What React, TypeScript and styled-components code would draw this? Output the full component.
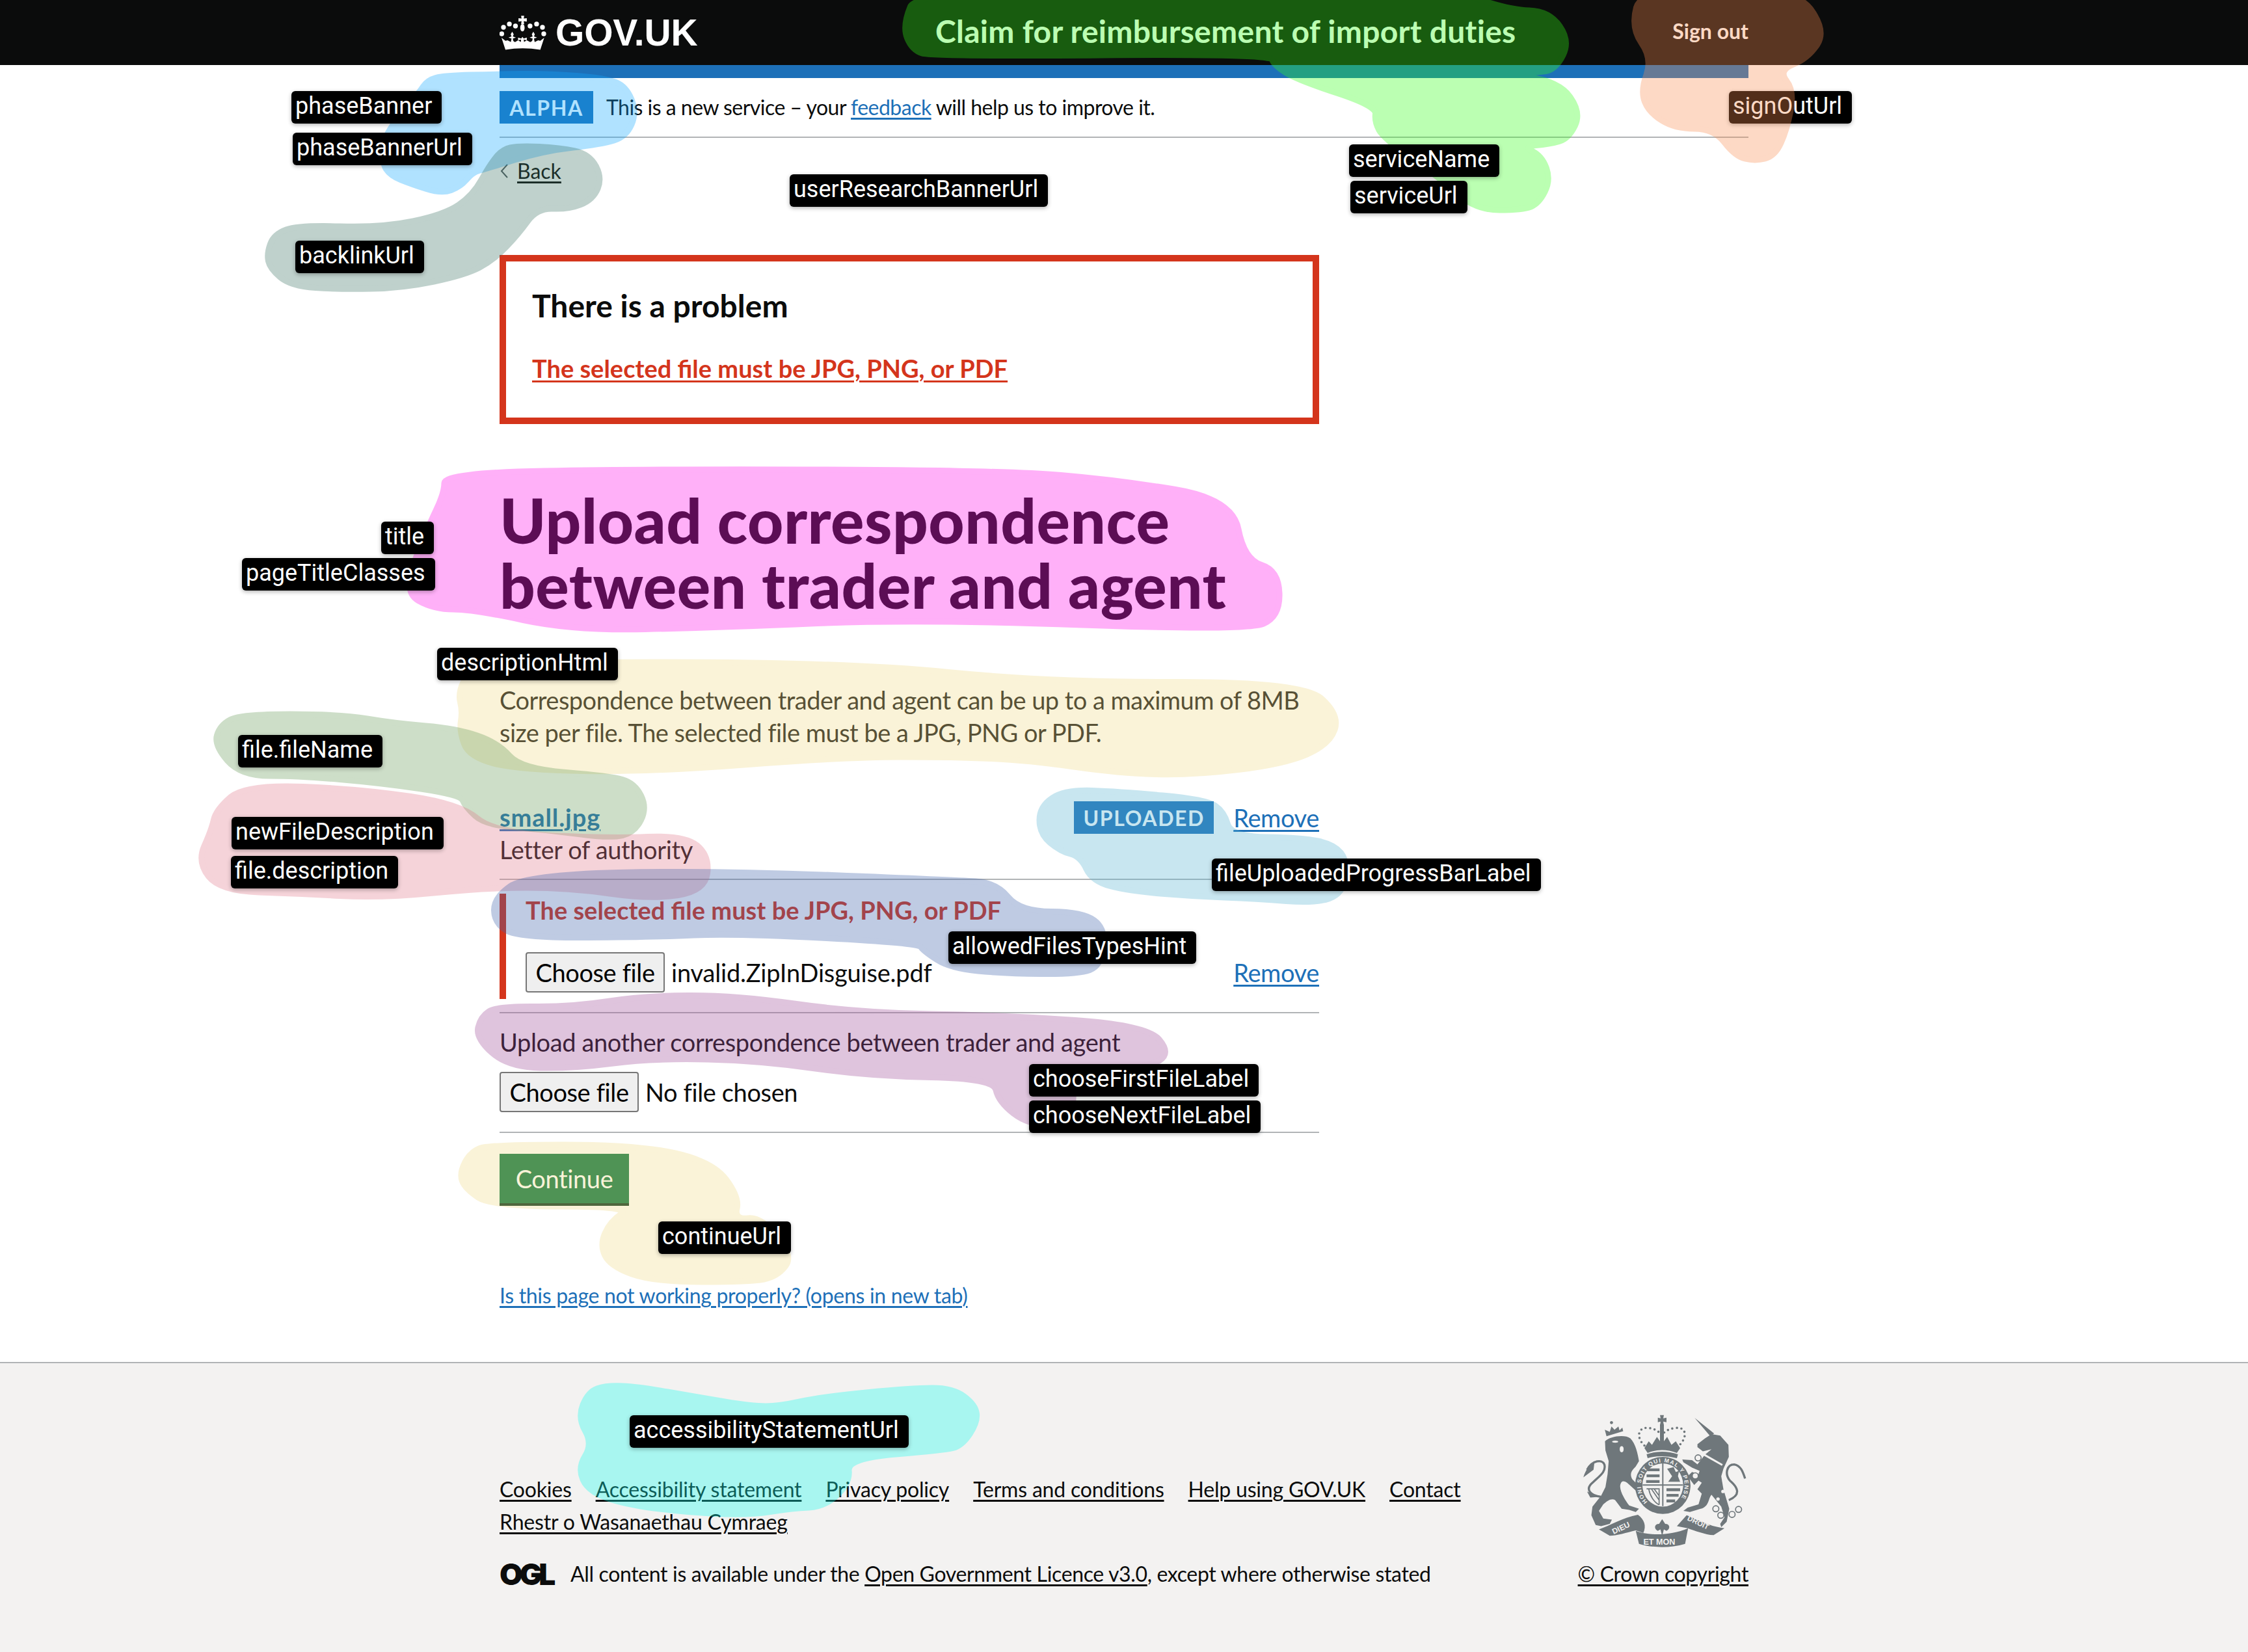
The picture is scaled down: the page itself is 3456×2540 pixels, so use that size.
import React from "react";
import styled, { createGlobalStyle } from "styled-components";

const GlobalStyle = createGlobalStyle`
	html, body {
		margin: 0;
		padding: 0;
		background: #fff;
		color: #0b0c0c;
		font-family: "Lato", "Liberation Sans", sans-serif;
		font-size: 38px;
		line-height: 50px;
		letter-spacing: -0.38px;
	}
`;

const Page = styled("div")`
	position: relative;
	width: 3456px;
	height: 2540px;
	overflow: hidden;
	display: flex;
	flex-direction: column;
`;

const Container = styled("div")`
	width: 1920px;
	margin: 0 auto;
`;

const Header = styled("header")`
	height: 100px;
	flex: none;
	background: #0b0c0c;
	color: #fff;
`;

const HeaderContent = styled(Container)`
	height: 100%;
	display: flex;
	align-items: center;
`;

const Logo = styled("a")`
	width: 670px;
	display: flex;
	align-items: center;
	gap: 14px;
	font-family: "Liberation Sans", sans-serif;
	font-weight: 700;
	font-size: 57px;
	letter-spacing: -0.2px;
	line-height: 96px;
`;

const ServiceName = styled("a")`
	flex: 1;
	padding-bottom: 4px;
	font-size: 48px;
	font-weight: 700;
	letter-spacing: 0.27px;
`;

const SignOut = styled("a")`
	padding-bottom: 4px;
	font-size: 32px;
	font-weight: 700;
	letter-spacing: 0;
`;

const BlueBand = styled(Container)`
	height: 20px;
	flex: none;
	background: #1d70b8;
`;

const PhaseBanner = styled("div")`
	display: flex;
	align-items: center;
	gap: 20px;
	padding: 20px 0;
	border-bottom: 2px solid #b1b4b6;
	font-size: 32px;
	letter-spacing: -0.52px;
`;

const Tag = styled("strong")<{ $width: number }>`
	display: block;
	width: ${({ $width }) => $width}px;
	height: 50px;
	background: #1d70b8;
	color: #fff;
	font-size: 32px;
	line-height: 52px;
	letter-spacing: 1.6px;
	text-align: center;
`;

const TextLink = styled("a")<{ $color?: string }>`
	color: ${({ $color }) => $color ?? "#1d70b8"};
	text-decoration: underline;
	text-decoration-thickness: 3px;
	text-underline-offset: 4px;
`;

const BackRow = styled("div")`
	display: flex;
	align-items: center;
	gap: 13px;
	margin-top: 36px;
	font-size: 32px;
	line-height: 30px;
	letter-spacing: 0;
`;

const ErrorSummary = styled("div")`
	width: 1260px;
	box-sizing: border-box;
	margin-top: 114px;
	padding: 38px 40px 51px;
	border: 10px solid #d4351c;
`;

const ErrorTitle = styled("h2")`
	margin: 0 0 41px;
	font-size: 48px;
	line-height: 60px;
	font-weight: 700;
	letter-spacing: 0;
`;

const ErrorLink = styled("a")`
	display: block;
	color: #d4351c;
	font-weight: 700;
	letter-spacing: 0;
	text-decoration: underline;
	text-decoration-thickness: 3px;
	text-underline-offset: 4px;
`;

const Title = styled("h1")`
	width: 1300px;
	margin: 97px 0 0;
	font-size: 96px;
	line-height: 100px;
	font-weight: 900;
	letter-spacing: 0.5px;
`;

const Description = styled("p")`
	width: 1260px;
	margin: 102px 0 0;
	letter-spacing: -0.52px;
`;

const Narrow = styled("div")`
	width: 1260px;
`;

const FileEntry = styled("div")`
	display: flex;
	justify-content: space-between;
	margin-top: 80px;
	padding-bottom: 20px;
	border-bottom: 2px solid #b1b4b6;
`;

const FileActions = styled("div")`
	display: flex;
	gap: 30px;
	padding-top: 1px;
`;

const FileName = styled("a")`
	display: block;
	color: #1d70b8;
	font-weight: 700;
	letter-spacing: 0.9px;
	text-decoration: underline;
	text-decoration-thickness: 3px;
	text-underline-offset: 4px;
`;

const InvalidEntry = styled("div")`
	padding: 21px 0 20px;
	border-bottom: 2px solid #b1b4b6;
`;

const ErrorGroup = styled("div")`
	box-sizing: border-box;
	height: 162px;
	padding-left: 30px;
	border-left: 10px solid #d4351c;
`;

const ErrorMessage = styled("div")`
	color: #d4351c;
	font-weight: 700;
	letter-spacing: 0;
`;

const InputRow = styled("div")<{ $top: number }>`
	display: flex;
	justify-content: space-between;
	align-items: center;
	margin-top: ${({ $top }) => $top}px;
`;

const FilePicker = styled("div")`
	display: flex;
	align-items: center;
	gap: 10px;
`;

const ChosenFile = styled("span")`
	letter-spacing: -0.2px;
`;

const ChooseButton = styled("button")`
	box-sizing: border-box;
	width: 214px;
	height: 62px;
	padding: 0;
	background: #efefef;
	border: 2px solid #767676;
	border-radius: 4px;
	color: #000;
	font: inherit;
	letter-spacing: inherit;
`;

const NextEntry = styled("div")`
	padding: 19px 0 30px;
	border-bottom: 2px solid #b1b4b6;
`;

const Continue = styled("button")`
	display: block;
	box-sizing: border-box;
	width: 199px;
	height: 80px;
	margin-top: 32px;
	padding: 0 0 4px;
	background: #00703c;
	border: 0;
	box-shadow: inset 0 -4px 0 #002d18;
	color: #fff;
	font: inherit;
	letter-spacing: inherit;
`;

const ReportRow = styled("div")`
	margin-top: 118px;
	font-size: 32px;
	line-height: 40px;
	letter-spacing: -0.3px;
`;

const Footer = styled("footer")`
	flex: 1;
	margin-top: 82px;
	background: #f3f2f1;
	border-top: 2px solid #b1b4b6;
	font-size: 32px;
	letter-spacing: -0.35px;
`;

const FooterContent = styled(Container)`
	display: flex;
	justify-content: space-between;
	align-items: flex-end;
	padding-top: 74px;
`;

const FooterMeta = styled("div")`
	padding-top: 95px;
`;

const FooterLinks = styled("div")`
	display: flex;
	flex-wrap: wrap;
	width: 1530px;
	column-gap: 37px;
	letter-spacing: -0.2px;
`;

const Licence = styled("div")`
	display: flex;
	align-items: center;
	gap: 27px;
	margin-top: 30px;
`;

const OglMark = styled("span")`
	width: 82px;
	font-family: "Inter", sans-serif;
	font-size: 46px;
	font-weight: 900;
	letter-spacing: -5px;
`;

const CrestColumn = styled("div")`
	display: flex;
	flex-direction: column;
	align-items: flex-end;
	gap: 12px;
`;

const Blobs = styled("svg")`
	position: absolute;
	left: 0;
	top: 0;
	pointer-events: none;
`;

const FieldLabel = styled("span")<{ $x: number; $y: number }>`
	position: absolute;
	left: ${({ $x }) => $x}px;
	top: ${({ $y }) => $y}px;
	height: 50px;
	padding: 0 15px 0 6px;
	background: #000;
	border-radius: 6px;
	box-shadow: 0 2px 6px rgba(0, 0, 0, 0.3);
	color: #fff;
	font-family: "Roboto", sans-serif;
	font-size: 36px;
	line-height: 46px;
	letter-spacing: 0;
	white-space: nowrap;
`;

type Blob = { color: string; points: [number, number][] };

const blobs: Blob[] = [
	{ color: "rgb(18,168,255)", points: [[683,116],[766,114],[842,113],[931,120],[963,133],[979,173],[963,210],[925,222],[836,232],[746,260],[727,265],[708,287],[679,298],[632,283],[600,270],[587,250],[590,207],[644,143],[657,123]] },
	{ color: "rgb(63,117,102)", points: [[797,224],[861,227],[906,237],[926,273],[912,307],[874,322],[826,320],[797,360],[759,400],[715,423],[619,443],[523,445],[447,440],[415,413],[410,390],[421,360],[459,346],[587,350],[683,330],[727,300],[753,253],[772,230]] },
	{ color: "rgb(51,255,24)", points: [[1412,-20],[2218,-20],[2320,15],[2382,17],[2414,63],[2392,107],[2361,112],[2305,112],[2397,125],[2431,173],[2412,213],[2382,222],[2341,225],[2371,240],[2384,277],[2366,313],[2341,323],[2269,323],[2218,277],[2127,213],[2113,187],[2116,163],[1994,123],[1958,100],[1953,83],[1433,87],[1402,77],[1387,40]] },
	{ color: "rgb(255,18,234)", points: [[683,727],[992,721],[1543,723],[1719,738],[1895,767],[1913,860],[1966,877],[1968,948],[1917,970],[1411,952],[1102,965],[882,970],[727,937],[667,937],[619,910],[657,812],[683,758]] },
	{ color: "rgb(240,219,138)", points: [[746,1018],[1300,1018],[1616,1049],[2002,1048],[2060,1099],[2044,1145],[1974,1175],[1833,1192],[1721,1189],[1581,1169],[1468,1164],[1300,1164],[1001,1187],[797,1184],[721,1164],[706,1124],[711,1093],[704,1066],[721,1030]] },
	{ color: "rgb(105,156,90)", points: [[370,1098],[523,1098],[606,1112],[702,1120],[766,1142],[801,1182],[938,1193],[976,1204],[995,1242],[976,1280],[938,1289],[842,1276],[746,1269],[715,1240],[708,1222],[587,1204],[459,1193],[370,1193],[329,1146],[338,1115]] },
	{ color: "rgb(225,123,141)", points: [[377,1206],[555,1213],[708,1236],[759,1280],[938,1289],[1053,1284],[1091,1316],[1084,1370],[1001,1383],[874,1365],[746,1365],[587,1381],[459,1374],[338,1370],[303,1325],[325,1276],[332,1245]] },
	{ color: "rgb(90,180,210)", points: [[1637,1214],[1721,1217],[1854,1229],[1882,1248],[1893,1286],[2002,1288],[2051,1298],[2072,1324],[2065,1374],[2023,1389],[1932,1382],[1833,1378],[1735,1370],[1679,1355],[1661,1317],[1630,1309],[1598,1282],[1598,1240]] },
	{ color: "rgb(63,99,171)", points: [[810,1345],[1091,1338],[1468,1353],[1532,1357],[1568,1401],[1665,1402],[1700,1428],[1693,1485],[1658,1498],[1546,1497],[1461,1489],[1419,1462],[1412,1450],[1129,1435],[1005,1441],[798,1442],[760,1420],[759,1380]] },
	{ color: "rgb(159,78,153)", points: [[764,1547],[880,1548],[988,1531],[1129,1530],[1320,1557],[1543,1561],[1763,1576],[1801,1620],[1763,1642],[1650,1650],[1650,1730],[1581,1730],[1535,1694],[1527,1658],[1336,1655],[1171,1631],[1005,1627],[880,1643],[781,1641],[731,1596],[739,1563]] },
	{ color: "rgb(240,219,138)", points: [[752,1760],[980,1760],[1096,1786],[1137,1841],[1129,1875],[1171,1871],[1220,1931],[1195,1963],[1154,1971],[1005,1971],[938,1947],[922,1914],[938,1878],[972,1855],[756,1855],[715,1828],[706,1804],[723,1771]] },
	{ color: "rgb(19,255,238)", points: [[932,2130],[981,2132],[1072,2148],[1156,2162],[1198,2162],[1261,2148],[1402,2134],[1465,2134],[1500,2160],[1503,2187],[1479,2223],[1451,2230],[1303,2242],[1307,2280],[1268,2317],[1219,2319],[1149,2330],[1051,2325],[960,2313],[904,2293],[888,2257],[911,2220],[888,2180],[904,2140]] },
	{ color: "rgb(249,141,81)", points: [[2524,-20],[2759,-20],[2808,47],[2780,90],[2734,108],[2759,140],[2747,200],[2729,240],[2698,248],[2667,240],[2635,198],[2575,198],[2535,173],[2522,140],[2540,90],[2507,43]] },
];

const labels: { text: string; x: number; y: number }[] = [
	{ text: "phaseBanner", x: 448, y: 140 },
	{ text: "phaseBannerUrl", x: 450, y: 204 },
	{ text: "backlinkUrl", x: 454, y: 370 },
	{ text: "userResearchBannerUrl", x: 1214, y: 268 },
	{ text: "serviceName", x: 2074, y: 222 },
	{ text: "serviceUrl", x: 2076, y: 278 },
	{ text: "title", x: 586, y: 802 },
	{ text: "pageTitleClasses", x: 372, y: 858 },
	{ text: "descriptionHtml", x: 672, y: 996 },
	{ text: "file.fileName", x: 366, y: 1130 },
	{ text: "newFileDescription", x: 356, y: 1256 },
	{ text: "file.description", x: 355, y: 1316 },
	{ text: "fileUploadedProgressBarLabel", x: 1863, y: 1320 },
	{ text: "allowedFilesTypesHint", x: 1458, y: 1432 },
	{ text: "chooseFirstFileLabel", x: 1582, y: 1636 },
	{ text: "chooseNextFileLabel", x: 1582, y: 1692 },
	{ text: "continueUrl", x: 1012, y: 1878 },
	{ text: "accessibilityStatementUrl", x: 968, y: 2176 },
];

// closed curve through the midpoints of a hand traced outline
function outline(points: [number, number][]) {
	const mid = (a: [number, number], b: [number, number]) => `${(a[0] + b[0]) / 2} ${(a[1] + b[1]) / 2}`;
	const last = points[points.length - 1];
	let d = `M${mid(last, points[0])}`;
	points.forEach((p, i) => {
		d += ` Q${p[0]} ${p[1]} ${mid(p, points[(i + 1) % points.length])}`;
	});
	return `${d} Z`;
}

function Crown() {
	const dots = [[103, 118], [130, 103], [158, 112], [225, 112], [255, 103], [282, 118], [95, 148], [288, 148]];
	return (
		<svg width="72" height="53" viewBox="85 65 215 157" fill="#fff">
			{dots.map(([cx, cy]) => <circle key={`${cx}-${cy}`} cx={cx} cy={cy} r="11" />)}
			<path d="M184 65 H198 L196 78 L210 76 V92 L196 90 L198 104 H184 L186 90 L172 92 V76 L186 78 Z" />
			<ellipse cx="190" cy="120" rx="10" ry="17" />
			<path d="M94 166 L112 180 L122 178 L138 186 L146 180 L156 186 L170 178 L184 186 L196 186 L210 178 L226 186 L236 180 L246 186 L262 178 L272 180 L290 166 L272 221 Q190 208 112 221 Z" />
			<path d="M143 138 L150 150 L146 160 L160 165 L146 170 L150 190 H136 L140 170 L126 165 L140 160 L136 150 Z" />
			<path d="M190 162 L196 170 L210 165 V178 L196 174 L198 190 H182 L184 174 L170 178 V165 L184 170 Z" />
			<path d="M240 138 L247 150 L243 160 L257 165 L243 170 L247 190 H233 L237 170 L223 165 L237 160 L233 150 Z" />
		</svg>
	);
}

function BackChevron() {
	return (
		<svg width="14" height="24" viewBox="0 0 14 24" fill="none" stroke="#505a5f" strokeWidth="2">
			<path d="M12 2 L3 12 L12 22" />
		</svg>
	);
}

function Crest() {
	const c = "#6f777b";
	const bg = "#f3f2f1";
	const rings = [[928, 335], [915, 418], [1010, 570], [1033, 600], [1085, 596], [1115, 573]];
	const spots = [[1048, 442], [1043, 490], [1020, 525]];
	const motto = { fontFamily: "Liberation Sans, sans-serif", fontWeight: 700, fill: bg, letterSpacing: 0 };
	return (
		<svg width="260" height="213" viewBox="380 120 780 640">
			{/* lion */}
			<path fill={c} d="M498 258 C520 235 590 225 615 245 C640 270 650 320 655 350 L640 375 C620 395 610 410 625 435 L660 470 L645 490 L600 450 C585 440 575 440 570 455 C560 480 590 530 610 555 L655 570 L640 585 L610 575 L575 570 L545 530 C530 520 510 530 490 550 L470 580 L490 615 L530 620 L520 640 L480 650 L455 645 L435 600 L440 560 L480 510 L500 470 L510 410 L515 350 L500 300 Z" />
			<path fill="none" stroke={c} strokeWidth="10" d="M480 515 C430 510 405 480 440 450 C470 420 505 400 495 365 C485 340 440 345 415 390" />
			<path fill={c} d="M398 425 C410 385 430 365 450 350 L445 390 Z M415 490 L470 515 L430 518 Z" />
			<path fill={c} d="M505 235 L497 205 L520 215 L528 190 L542 205 L560 190 L565 208 L578 195 L582 212 Z" />
			<circle cx="528" cy="172" r="7" fill={c} />
			<ellipse cx="545" cy="260" rx="14" ry="5" fill={bg} />
			<ellipse cx="575" cy="295" rx="9" ry="14" fill={bg} />
			{/* unicorn */}
			<path fill={c} d="M912 150 L1002 222 L985 236 Z" />
			<path fill={c} d="M925 272 L960 245 L990 225 L1030 232 L1068 275 L1070 330 L1045 385 L1035 420 L1045 480 L1060 530 L1072 570 L1060 630 L1035 655 L1030 640 L1050 610 L1035 560 L990 505 C975 520 980 560 940 570 L890 585 L860 580 L880 565 L930 550 L945 500 L925 480 L945 450 L930 440 L910 460 L880 420 L900 400 L930 410 L935 395 L900 380 L860 355 L855 342 L900 345 L925 365 L960 320 L990 295 L950 305 L925 285 Z" />
			<path fill="none" stroke={bg} strokeWidth="9" d="M952 318 L1040 368" />
			<path fill="none" stroke={c} strokeWidth="10" d="M1070 530 C1130 505 1110 470 1075 440 C1050 410 1060 365 1095 365 C1125 370 1135 400 1145 430" />
			{rings.map(([cx, cy]) => <circle key={cx} cx={cx} cy={cy} r="14" fill={bg} stroke={c} strokeWidth="5" />)}
			{spots.map(([cx, cy]) => <circle key={cy} cx={cx} cy={cy} r="8" fill={bg} />)}
			{/* crown */}
			<path fill="none" stroke={c} strokeWidth="11" strokeLinecap="round" strokeDasharray="0 21" d="M680 278 C640 240 650 190 700 197 C730 200 750 215 760 232 C770 215 790 200 825 197 C875 190 880 240 840 278" />
			<path fill={c} d="M680 290 L700 258 L715 275 L738 238 L752 258 V180 H770 V258 L785 238 L805 275 L825 258 L845 290 L830 312 Q760 285 695 312 Z" />
			<path fill={c} d="M752 137 H770 L767 152 L782 149 V170 L767 167 L770 185 H752 L755 167 L742 170 V149 L755 152 Z" />
			<path fill={c} d="M690 318 Q760 295 835 318 L830 336 Q760 318 695 336 Z" />
			{/* garter and shield */}
			<ellipse cx="765" cy="462" rx="128" ry="132" fill={c} />
			<ellipse cx="765" cy="460" rx="94" ry="100" fill={bg} />
			<path fill="none" stroke={c} strokeWidth="6" d="M765 358 V558 M672 460 H858" />
			<path fill="none" stroke={c} strokeWidth="13" d="M695 390 H750 M690 418 H750 M688 444 H750 M782 482 H845 M782 508 H838 M782 534 H822" />
			<path fill={c} d="M785 385 L815 378 L825 400 L840 395 L835 420 L845 445 H790 L808 420 Z" />
			<path fill="none" stroke={c} strokeWidth="5" d="M700 478 C705 510 725 540 748 552 M712 478 L748 530 M725 478 L748 510 M690 478 H748 V552" />
			<path id="garter-ring" fill="none" d="M694 538 A101 107 0 1 1 836 538" />
			<text fontSize="26" {...motto}>
				<textPath href="#garter-ring" textLength="470">HONI SOIT QUI MAL Y PENSE</textPath>
			</text>
			{/* motto */}
			<path fill={c} d="M470 665 C520 650 580 610 650 598 C680 620 690 650 675 682 L640 670 C600 680 550 695 520 695 Z" />
			<path fill={c} d="M640 672 C700 695 800 695 882 660 L868 732 C800 752 720 752 655 732 Z" />
			<path fill={c} d="M875 600 L830 650 L880 660 C910 670 960 690 1000 692 L1050 660 C970 650 920 615 875 600 Z" />
			<path fill={c} d="M762 618 L776 640 C800 640 800 665 782 672 L770 665 L762 696 L754 665 L742 672 C724 665 724 640 748 640 Z" />
			<text fontSize="36" transform="translate(538 688) rotate(-25)" {...motto}>DIEU</text>
			<text fontSize="38" x="675" y="736" {...motto}>ET MON</text>
			<text fontSize="34" transform="translate(876 622) rotate(25)" {...motto}>DROIT</text>
		</svg>
	);
}

function App() {
	return (
		<Page>
			<GlobalStyle />
			<Header>
				<HeaderContent>
					<Logo><Crown />GOV.UK</Logo>
					<ServiceName>Claim for reimbursement of import duties</ServiceName>
					<SignOut>Sign out</SignOut>
				</HeaderContent>
			</Header>
			<BlueBand />
			<Container>
				<PhaseBanner>
					<Tag $width={144}>ALPHA</Tag>
					<span>This is a new service – your <TextLink>feedback</TextLink> will help us to improve it.</span>
				</PhaseBanner>
				<BackRow>
					<BackChevron />
					<TextLink $color="#0b0c0c">Back</TextLink>
				</BackRow>
				<ErrorSummary>
					<ErrorTitle>There is a problem</ErrorTitle>
					<ErrorLink>The selected file must be JPG, PNG, or PDF</ErrorLink>
				</ErrorSummary>
				<Title>Upload correspondence<br />between trader and agent</Title>
				<Description>Correspondence between trader and agent can be up to a maximum of 8MB size per file. The selected file must be a JPG, PNG or PDF.</Description>
				<Narrow>
					<FileEntry>
						<div>
							<FileName>small.jpg</FileName>
							<div>Letter of authority</div>
						</div>
						<FileActions>
							<Tag $width={215}>UPLOADED</Tag>
							<TextLink>Remove</TextLink>
						</FileActions>
					</FileEntry>
					<InvalidEntry>
						<ErrorGroup>
							<ErrorMessage>The selected file must be JPG, PNG, or PDF</ErrorMessage>
							<InputRow $top={40}>
								<FilePicker>
									<ChooseButton>Choose file</ChooseButton>
									<ChosenFile>invalid.ZipInDisguise.pdf</ChosenFile>
								</FilePicker>
								<TextLink>Remove</TextLink>
							</InputRow>
						</ErrorGroup>
					</InvalidEntry>
					<NextEntry>
						<div>Upload another correspondence between trader and agent</div>
						<InputRow $top={21}>
							<FilePicker>
								<ChooseButton>Choose file</ChooseButton>
								<span>No file chosen</span>
							</FilePicker>
						</InputRow>
					</NextEntry>
				</Narrow>
				<Continue>Continue</Continue>
				<ReportRow><TextLink>Is this page not working properly? (opens in new tab)</TextLink></ReportRow>
			</Container>
			<Footer>
				<FooterContent>
					<FooterMeta>
						<FooterLinks>
							<TextLink $color="#0b0c0c">Cookies</TextLink>
							<TextLink $color="#0b0c0c">Accessibility statement</TextLink>
							<TextLink $color="#0b0c0c">Privacy policy</TextLink>
							<TextLink $color="#0b0c0c">Terms and conditions</TextLink>
							<TextLink $color="#0b0c0c">Help using GOV.UK</TextLink>
							<TextLink $color="#0b0c0c">Contact</TextLink>
							<TextLink $color="#0b0c0c">Rhestr o Wasanaethau Cymraeg</TextLink>
						</FooterLinks>
						<Licence>
							<OglMark>OGL</OglMark>
							<span>All content is available under the <TextLink $color="#0b0c0c">Open Government Licence v3.0</TextLink>, except where otherwise stated</span>
						</Licence>
					</FooterMeta>
					<CrestColumn>
						<Crest />
						<TextLink $color="#0b0c0c">© Crown copyright</TextLink>
					</CrestColumn>
				</FooterContent>
			</Footer>
			<FieldLabel $x={2658} $y={140}>signOutUrl</FieldLabel>
			<Blobs width="3456" height="2540" viewBox="0 0 3456 2540">
				{blobs.map(blob => <path key={outline(blob.points)} d={outline(blob.points)} fill={blob.color} stroke={blob.color} strokeWidth="9" strokeLinejoin="round" opacity="0.33" />)}
			</Blobs>
			{labels.map(label => <FieldLabel key={label.text} $x={label.x} $y={label.y}>{label.text}</FieldLabel>)}
		</Page>
	);
}

export default App;
